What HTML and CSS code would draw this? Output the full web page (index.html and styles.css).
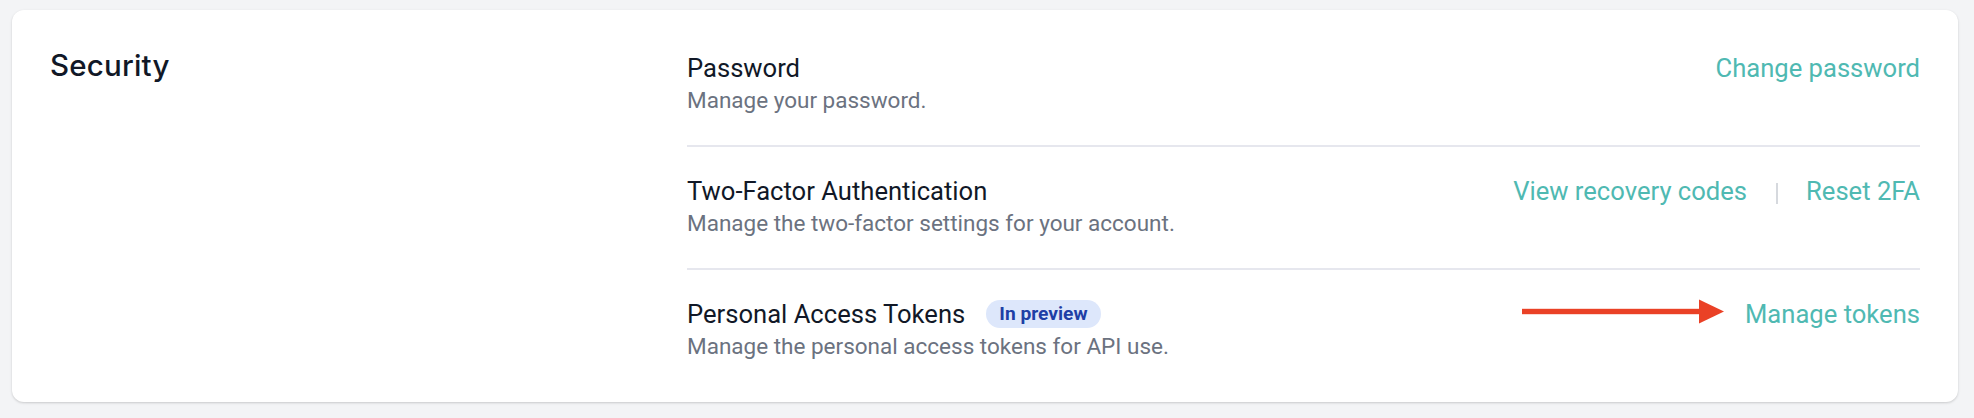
FILE: index.html
```html
<!DOCTYPE html>
<html lang="en">
<head>
<meta charset="utf-8">
<title>Security settings</title>
<link rel="stylesheet" href="styles.css">
</head>
<body>
  <section class="card">
    <h2 class="section-title">Security</h2>
    <div class="rows">
      <div class="row">
        <div class="info">
          <div class="title-line"><span class="title">Password</span></div>
          <p class="desc">Manage your password.</p>
        </div>
        <div class="actions">
          <a class="link" href="#">Change password</a>
        </div>
      </div>
      <div class="row">
        <div class="info">
          <div class="title-line"><span class="title">Two-Factor Authentication</span></div>
          <p class="desc">Manage the two-factor settings for your account.</p>
        </div>
        <div class="actions">
          <a class="link" href="#">View recovery codes</a>
          <span class="sep" aria-hidden="true"></span>
          <a class="link" href="#">Reset 2FA</a>
        </div>
      </div>
      <div class="row">
        <div class="info">
          <div class="title-line"><span class="title">Personal Access Tokens</span><span class="badge">In preview</span></div>
          <p class="desc">Manage the personal access tokens for API use.</p>
        </div>
        <div class="actions">
          <svg class="arrow" width="202" height="25" viewBox="0 0 202 25" aria-hidden="true">
            <rect x="0" y="9.8" width="180" height="5.4" fill="#ea4126"/>
            <polygon points="177,0.5 202,12.5 177,24.5" fill="#ea4126"/>
          </svg>
          <a class="link" href="#">Manage tokens</a>
        </div>
      </div>
    </div>
  </section>
</body>
</html>
```

FILE: styles.css
```css
* { box-sizing: border-box; }

html, body {
  margin: 0;
  background: #f3f4f6;
}

body {
  padding: 10px 16px 16px 12px;
  font-family: Roboto, "Liberation Sans", Arial, sans-serif;
  color: #111827;
}

.card {
  background: #ffffff;
  border-radius: 12px;
  box-shadow: 0 1px 3px rgba(0, 0, 0, 0.12), 0 1px 2px rgba(0, 0, 0, 0.06);
  padding: 14px 38px 11px 38px;
  display: grid;
  grid-template-columns: 617px 1fr;
  column-gap: 20px;
  align-items: start;
}

.section-title {
  margin: 0;
  padding-top: 23px;
  font-family: Inter, "Noto Sans", sans-serif;
  font-weight: 500;
  font-size: 29.5px;
  line-height: 36px;
  color: #111827;
  letter-spacing: 0.2px;
}

.rows {
  display: flex;
  flex-direction: column;
}

.row {
  display: flex;
  justify-content: space-between;
  align-items: flex-start;
  padding: 28px 0;
}

.row + .row {
  border-top: 2px solid #e6e7ee;
}

.info {
  display: flex;
  flex-direction: column;
}

.title-line {
  display: flex;
  align-items: center;
  gap: 21px;
  height: 32px;
}

.title {
  font-size: 25.6px;
  line-height: 32px;
  color: #111827;
}

.badge {
  display: inline-flex;
  align-items: center;
  height: 28px;
  padding: 0 13px;
  border-radius: 14px;
  background: #dde7fb;
  color: #1e3fa6;
  font-weight: 700;
  font-size: 19.2px;
  line-height: 28px;
}

.desc {
  margin: 0;
  font-size: 22.5px;
  line-height: 33px;
  color: #6b7280;
}

.actions {
  display: flex;
  align-items: center;
  height: 32px;
}

.link {
  font-size: 25.6px;
  line-height: 32px;
  color: #4fb9b2;
  text-decoration: none;
  white-space: nowrap;
}

.sep {
  width: 2px;
  height: 21px;
  background: #d6d9de;
  margin: 4px 28px 0 29px;
}

.arrow {
  display: block;
  margin-right: 21px;
  margin-top: -5px;
}
```
